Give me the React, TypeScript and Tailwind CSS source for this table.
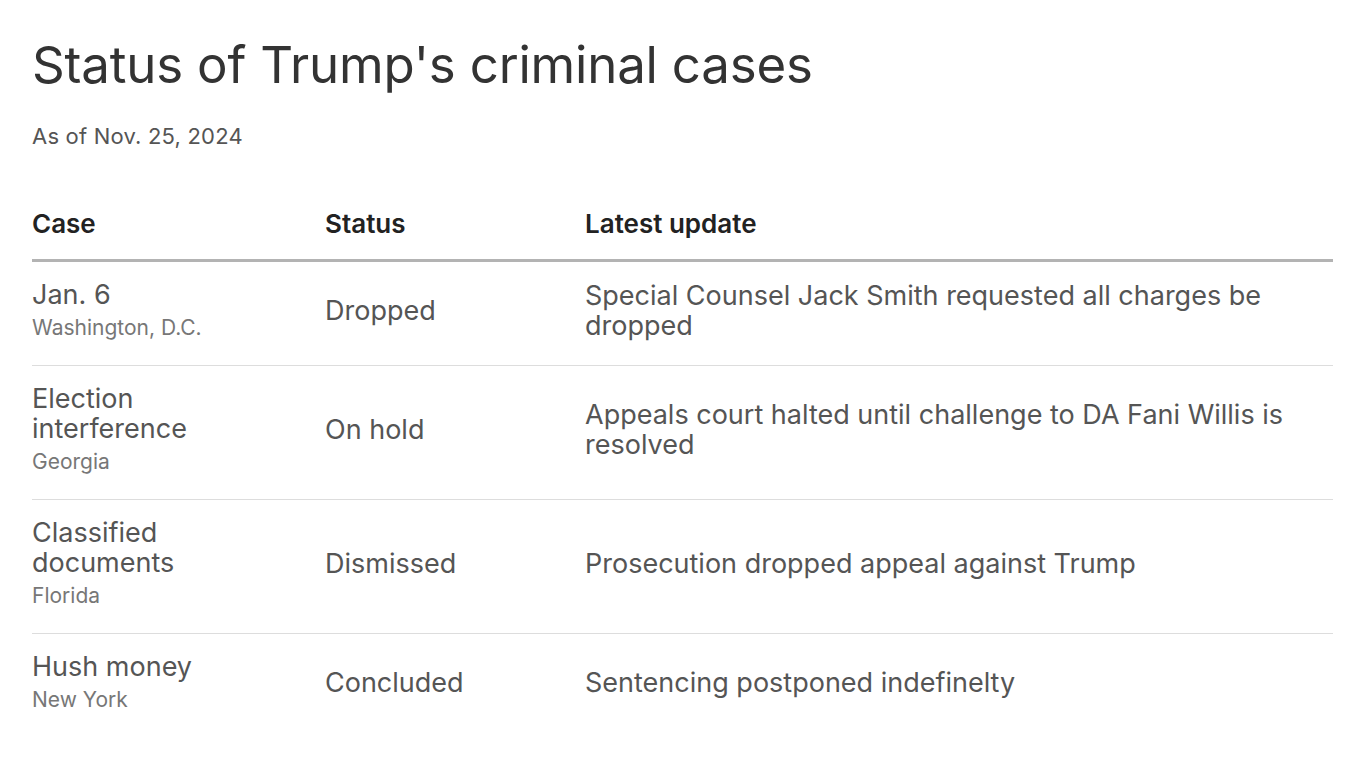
import React from 'react';

const rows = [
  { name: 'Jan. 6', place: 'Washington, D.C.', status: 'Dropped', update: 'Special Counsel Jack Smith requested all charges be dropped' },
  { name: 'Election interference', place: 'Georgia', status: 'On hold', update: 'Appeals court halted until challenge to DA Fani Willis is resolved' },
  { name: 'Classified documents', place: 'Florida', status: 'Dismissed', update: 'Prosecution dropped appeal against Trump' },
  { name: 'Hush money', place: 'New York', status: 'Concluded', update: 'Sentencing postponed indefinelty' },
];

export default function App() {
  return (
    <div className="min-h-screen bg-white px-8 pt-[33px] font-['Inter',sans-serif]">
      <h1 className="text-[51px] leading-[64px] text-[#333] tracking-[-0.2px]">Status of Trump's criminal cases</h1>
      <p className="mt-[26px] text-[22px] leading-[26px] text-[#555] tracking-[0.2px]">As of Nov. 25, 2024</p>

      <div className="mt-[60px] mr-[1px]">
        {/* header */}
        <div className="flex pb-[20px] border-b-[3px] border-[#b3b3b3]">
          <div className="w-[293px] text-[26px] leading-[30px] font-semibold text-[#222]">Case</div>
          <div className="w-[260px] text-[26px] leading-[30px] font-semibold text-[#222]">Status</div>
          <div className="flex-1 text-[26px] leading-[30px] font-semibold text-[#222]">Latest update</div>
        </div>

        {rows.map((r, i) => (
          <div key={r.name} className={`flex items-center pt-[18px] pb-[24px] ${i < rows.length - 1 ? 'border-b border-[#ddd]' : ''}`}>
            <div className="w-[293px] pr-8">
              <p className="text-[27px] leading-[30px] text-[#555]">{r.name}</p>
              <p className="mt-[5px] text-[21px] leading-[26px] text-[#777]">{r.place}</p>
            </div>
            <div className="w-[260px] text-[27px] leading-[30px] text-[#555]">{r.status}</div>
            <div className="flex-1 text-[27px] leading-[30px] text-[#555] pr-8">{r.update}</div>
          </div>
        ))}
      </div>
    </div>
  );
}
